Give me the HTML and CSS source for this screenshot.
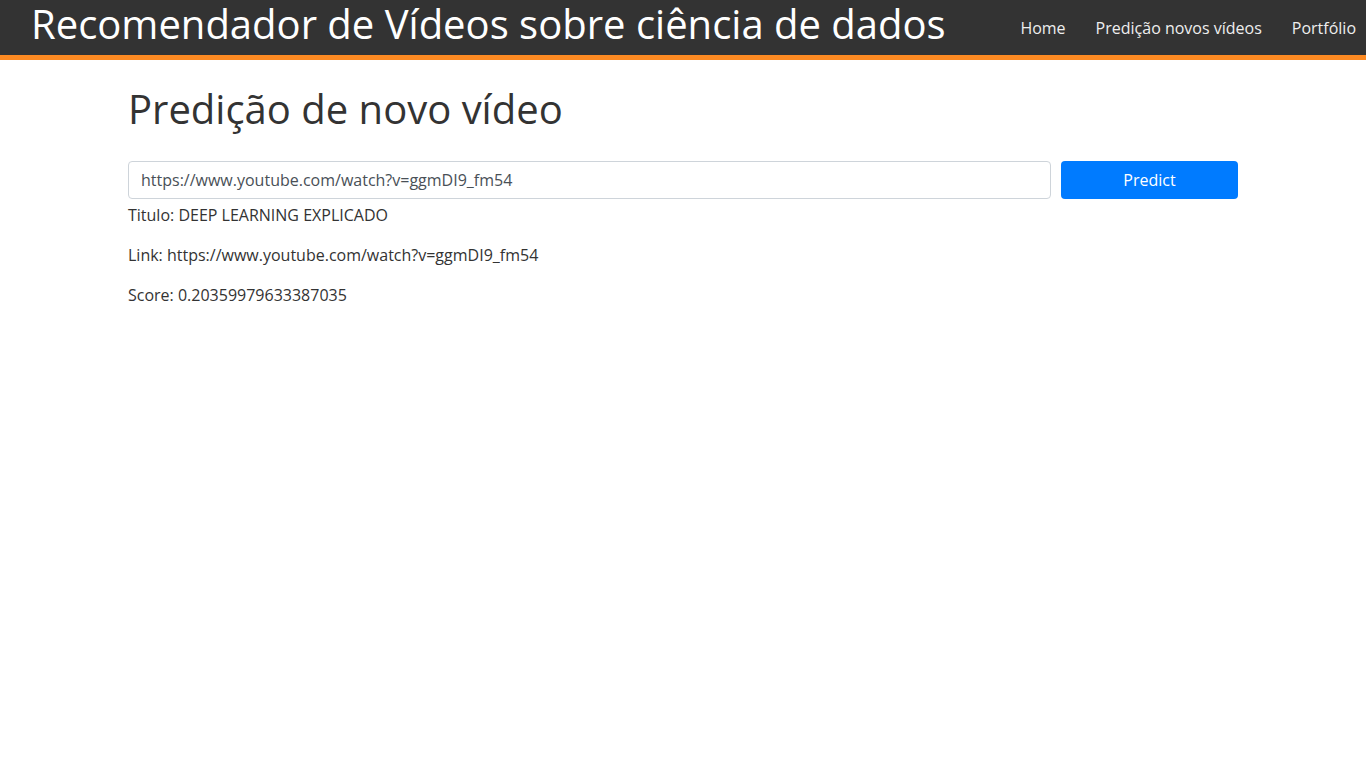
FILE: index.html
```html
<!DOCTYPE html>
<html lang="pt">
<head>
<meta charset="utf-8">
<title>Recomendador</title>
<link rel="stylesheet" href="styles.css">
</head>
<body>
<header class="topbar">
  <div class="brand">Recomendador de Vídeos sobre ciência de dados</div>
  <nav class="nav">
    <a href="#">Home</a>
    <a href="#">Predição novos vídeos</a>
    <a href="#">Portfólio</a>
  </nav>
</header>
<main class="container">
  <h1 class="page-title">Predição de novo vídeo</h1>
  <form class="predict-form">
    <input class="url-input" type="text" value="https://www.youtube.com/watch?v=ggmDI9_fm54">
    <button class="predict-btn" type="button">Predict</button>
  </form>
  <p class="result">Titulo: DEEP LEARNING EXPLICADO</p>
  <p class="result">Link: https://www.youtube.com/watch?v=ggmDI9_fm54</p>
  <p class="result">Score: 0.20359979633387035</p>
</main>
</body>
</html>
```
FILE: styles.css
```css
* { box-sizing: border-box; }
html, body { margin: 0; padding: 0; }
body {
  font-family: "Open Sans", "Liberation Sans", sans-serif;
  font-size: 16px;
  line-height: 1.5;
  color: #333;
  background: #fff;
}
.topbar {
  display: flex;
  align-items: flex-start;
  justify-content: space-between;
  height: 60px;
  background: #333;
  border-bottom: 5px solid #fd8a22;
  padding: 0 10px 0 31px;
}
.brand {
  font-size: 40px;
  line-height: 54px;
  color: #fff;
  margin-top: -3px;
}
.nav {
  display: flex;
  gap: 30px;
  padding-top: 16px;
}
.nav a {
  color: #eee;
  text-decoration: none;
  font-size: 16px;
  line-height: 24px;
}
.container {
  width: 1110px;
  margin: 0 auto;
}
.page-title {
  font-size: 40px;
  font-weight: 400;
  line-height: 48px;
  margin: 25px 0 28px;
  color: #333;
}
.predict-form {
  display: flex;
  gap: 10px;
  margin: 0;
}
.url-input {
  flex: 1;
  height: 38px;
  border: 1px solid #ced4da;
  border-radius: 4px;
  padding: 6px 12px;
  font-family: inherit;
  font-size: 16px;
  color: #495057;
}
.predict-btn {
  width: 177px;
  height: 38px;
  border: none;
  border-radius: 4px;
  background: #007bff;
  color: #fff;
  font-family: inherit;
  font-size: 16px;
}
.result {
  margin: 4px 0 16px;
}
.result + .result { margin-top: 0; }
```
